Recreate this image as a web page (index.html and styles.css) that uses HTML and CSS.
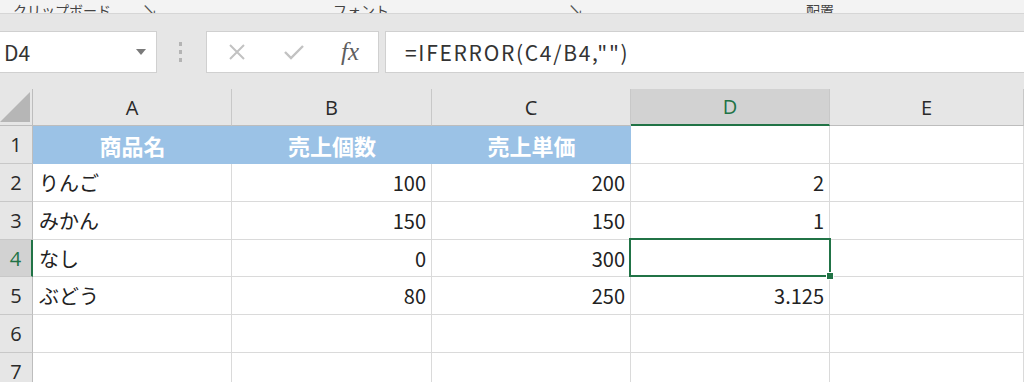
FILE: index.html
```html
<!DOCTYPE html>
<html>
    <head>
        <title>IFERROR</title>
        <link rel="stylesheet" href="styles.css">
    </head>
    <body>
        <div class="ribbon">
            <div class="group clip"><span class="label">クリップボード</span><span class="launch">&#8600;</span></div>
            <div class="group font"><span class="label">フォント</span><span class="launch">&#8600;</span></div>
            <div class="group align"><span class="label">配置</span></div>
        </div>

        <div class="fbar">
            <div class="namebox">
                <span>D4</span>
                <svg width="10" height="6" viewBox="0 0 10 6"><polygon points="0,0 10,0 5,6" fill="#7a7a7a"/></svg>
            </div>
            <div class="grip"><i></i><i></i><i></i></div>
            <div class="buttons">
                <svg width="20" height="20" viewBox="0 0 20 20"><path d="M3 3 L17 17 M17 3 L3 17" stroke="#c2c2c2" stroke-width="2" fill="none"/></svg>
                <svg width="22" height="20" viewBox="0 0 22 20"><path d="M2 10 L8 16 L20 4" stroke="#c2c2c2" stroke-width="2.4" fill="none"/></svg>
                <span class="fx">fx</span>
            </div>
            <div class="formula">=IFERROR(C4/B4,"")</div>
        </div>

        <div class="sheet">
            <div class="corner"><svg width="30" height="30" viewBox="0 0 30 30"><polygon points="30,0 30,30 0,30" fill="#b6b6b6"/></svg></div>
            <div class="colhead">A</div>
            <div class="colhead">B</div>
            <div class="colhead">C</div>
            <div class="colhead active">D</div>
            <div class="colhead">E</div>

            <div class="rowhead">1</div>
            <div class="cell title">商品名</div>
            <div class="cell title">売上個数</div>
            <div class="cell title">売上単価</div>
            <div class="cell"></div>
            <div class="cell"></div>

            <div class="rowhead">2</div>
            <div class="cell">りんご</div>
            <div class="cell num">100</div>
            <div class="cell num">200</div>
            <div class="cell num">2</div>
            <div class="cell"></div>

            <div class="rowhead">3</div>
            <div class="cell">みかん</div>
            <div class="cell num">150</div>
            <div class="cell num">150</div>
            <div class="cell num">1</div>
            <div class="cell"></div>

            <div class="rowhead active">4</div>
            <div class="cell">なし</div>
            <div class="cell num">0</div>
            <div class="cell num">300</div>
            <div class="cell selected"><span class="handle"></span></div>
            <div class="cell"></div>

            <div class="rowhead">5</div>
            <div class="cell">ぶどう</div>
            <div class="cell num">80</div>
            <div class="cell num">250</div>
            <div class="cell num">3.125</div>
            <div class="cell"></div>

            <div class="rowhead">6</div>
            <div class="cell"></div>
            <div class="cell"></div>
            <div class="cell"></div>
            <div class="cell"></div>
            <div class="cell"></div>

            <div class="rowhead">7</div>
            <div class="cell"></div>
            <div class="cell"></div>
            <div class="cell"></div>
            <div class="cell"></div>
            <div class="cell"></div>
        </div>
    </body>
</html>
```

FILE: styles.css
```css
html {
    overflow: hidden;
}

body {
    margin: 0;
    width: 1024px;
    height: 382px;
    overflow: hidden;
    background-color: #ffffff;
    font-family: "Noto Sans CJK JP", "Noto Sans", sans-serif;
    color: #222222;
}

/* ribbon bottom edge, labels cut off at the top */
.ribbon {
    display: flex;
    height: 13px;
    overflow: hidden;
    background-color: #f3f3f3;
    border-bottom: 1px solid #d6d6d6;
}

.group {
    display: flex;
    align-items: flex-end;
    height: 13px;
    font-size: 14px;
    line-height: 14px;
    color: #444444;
}

.group .label,
.group .launch {
    margin-bottom: -4px;
}

.clip {
    width: 333px;
    padding-left: 13px;
    box-sizing: border-box;
}

.clip .launch {
    margin-left: 31px;
}

.font {
    width: 473px;
}

.font .launch {
    margin-left: 179px;
}

.launch {
    font-size: 16px;
    color: #555555;
}

/* formula bar */
.fbar {
    display: flex;
    align-items: center;
    height: 75px;
    background-color: #e6e6e6;
}

.namebox {
    display: flex;
    align-items: center;
    justify-content: space-between;
    width: 158px;
    height: 42px;
    margin-left: -1px;
    padding: 0 10px 0 4px;
    box-sizing: border-box;
    background-color: #ffffff;
    border: 1px solid #d0d0d0;
    font-size: 21px;
    color: #333333;
}

.grip {
    display: flex;
    flex-direction: column;
    gap: 4px;
    width: 4px;
    margin: 0 23px 0 22px;
}

.grip i {
    display: block;
    width: 3px;
    height: 4px;
    background-color: #b4b4b4;
}

.buttons {
    display: flex;
    align-items: center;
    width: 173px;
    height: 42px;
    padding: 0 12px 0 20px;
    box-sizing: border-box;
    gap: 36px;
    background-color: #ffffff;
    border: 1px solid #d0d0d0;
}

.fx {
    font-family: "Liberation Serif", serif;
    font-style: italic;
    font-size: 25px;
    color: #5e5e5e;
    margin-left: 0;
}

.formula {
    flex: 1;
    height: 42px;
    margin-left: 6px;
    margin-right: -2px;
    padding-left: 19px;
    box-sizing: border-box;
    background-color: #ffffff;
    border: 1px solid #d0d0d0;
    font-size: 21px;
    line-height: 40px;
    letter-spacing: 1.7px;
    color: #333333;
}

/* worksheet grid */
.sheet {
    display: grid;
    grid-template-columns: 33px 199px 200px 199px 199px 194px;
    grid-template-rows: 37px 38px 38px 38px 37px 38px 38px 38px;
    font-size: 20px;
}

.sheet > div {
    box-sizing: border-box;
    border-right: 1px solid #dadada;
    border-bottom: 1px solid #dadada;
}

.corner {
    display: flex;
    align-items: flex-end;
    background-color: #e6e6e6;
    border-color: #bdbdbd !important;
    padding: 0 2px 3px 0;
}

.colhead {
    display: flex;
    align-items: center;
    justify-content: center;
    background-color: #e6e6e6;
    border-right-color: #c8c8c8 !important;
    border-bottom-color: #bdbdbd !important;
    font-family: "Open Sans", "Noto Sans", sans-serif;
    font-size: 20px;
    color: #2a2a2a;
}

.colhead.active {
    background-color: #d2d2d2;
    border-bottom: 2px solid #217346 !important;
    color: #217346;
}

.rowhead {
    display: flex;
    align-items: center;
    justify-content: center;
    background-color: #e6e6e6;
    border-right-color: #bdbdbd !important;
    border-bottom-color: #c8c8c8 !important;
    font-family: "Open Sans", "Noto Sans", sans-serif;
    font-size: 20px;
    color: #2a2a2a;
}

.rowhead.active {
    background-color: #d2d2d2;
    border-right: 2px solid #217346 !important;
    color: #217346;
}

.cell {
    display: flex;
    align-items: center;
    padding: 0 5px 0 6px;
    white-space: nowrap;
}

.num {
    justify-content: flex-end;
}

.title {
    justify-content: center;
    background-color: #9bc2e6;
    border-color: #9bc2e6 !important;
    color: #ffffff;
    font-size: 22px;
    font-weight: bold;
}

.selected {
    position: relative;
}

.selected::before {
    content: "";
    position: absolute;
    top: -2px;
    left: -2px;
    right: -2px;
    bottom: -1px;
    border: 2px solid #217346;
}

.handle {
    position: absolute;
    right: -5px;
    bottom: -4px;
    width: 6px;
    height: 6px;
    background-color: #217346;
    border: 1px solid #ffffff;
    z-index: 1;
}
```
